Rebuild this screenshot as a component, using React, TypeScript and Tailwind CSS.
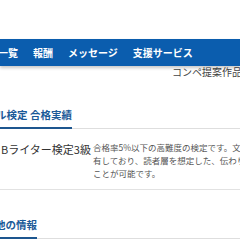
const navItems = ['一覧', '報酬', 'メッセージ', '支援サービス'];

function SectionHeading({ label, offset }: { label: string; offset: string }) {
  return (
    <div className="flex border-b border-[#dedede]">
      <span
        className={`-mb-px border-b-2 border-[#1d568f] pb-[5px] text-[10.5px] leading-[14px] font-bold text-[#1b5a98] whitespace-nowrap ${offset}`}
      >
        {label}
      </span>
    </div>
  );
}

export default function App() {
  return (
    <div className="h-[240px] w-[240px] overflow-hidden bg-white font-['Noto_Sans_CJK_JP','Noto_Sans',sans-serif]">
      <div className="h-[39px]" />

      {/* Nav */}
      <nav className="relative z-10 flex h-[27px] items-center gap-[15px] bg-[#0b5dae] pl-0 shadow-[0_2px_3px_rgba(0,0,0,0.22)]">
        {navItems.map((item, i) => (
          <span
            key={item}
            className={`whitespace-nowrap text-[10px] font-bold leading-[12px] text-white ${i === 0 ? '-ml-[2px]' : ''}`}
          >
            {item}
          </span>
        ))}
      </nav>

      <div className="flex h-[12px] justify-end">
        <span className="-mr-[2px] whitespace-nowrap text-[10px] leading-[12px] text-[#444]">コンペ提案作品</span>
      </div>

      {/* Qualification */}
      <div className="pt-[30px]">
        <SectionHeading label="ル検定 合格実績" offset="-ml-[4px]" />
      </div>

      <div className="flex border-b border-[#e2e2e2] pt-[12px] pb-[9px]">
        <div className="w-[93px] shrink-0 whitespace-nowrap pl-px text-[11px] leading-[17px] text-[#333]">
          Bライター検定3級
        </div>
        <div className="text-[8.5px] leading-[13px] text-[#555]">
          <p className="whitespace-nowrap">合格率5%以下の高難度の検定です。文章作成の基礎知識を</p>
          <p className="whitespace-nowrap">有しており、読者層を想定した、伝わりやすい文章を作成する</p>
          <p className="whitespace-nowrap">ことが可能です。</p>
        </div>
      </div>

      {/* Other info */}
      <div className="pt-[28px]">
        <SectionHeading label="他の情報" offset="-ml-[5px]" />
      </div>
    </div>
  );
}
